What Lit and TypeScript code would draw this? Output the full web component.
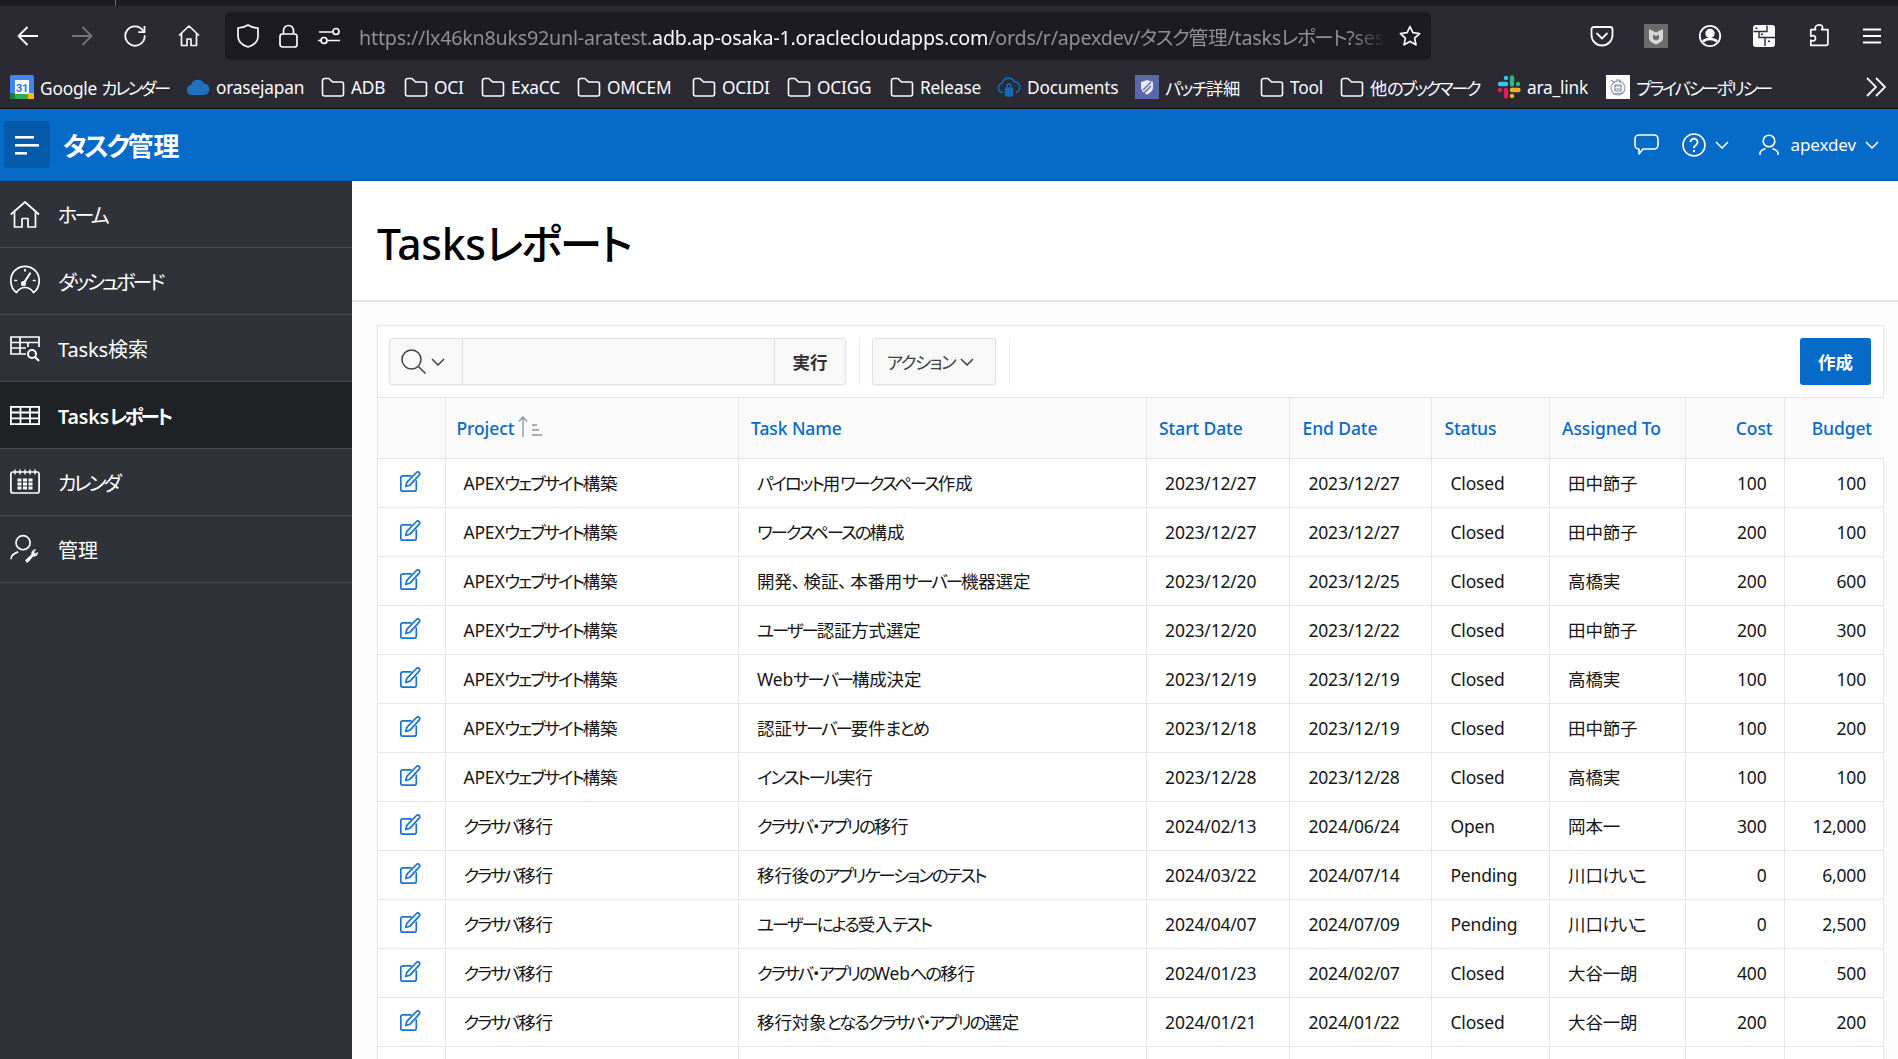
import { LitElement, html, css, svg } from "lit";
import { customElement } from "lit/decorators.js";

const jp = (s: string) =>
  s.split(/([\u3040-\u30ff\u30fb]+|\u3001)/).map((p, i) =>
    i % 2 ? html`<span class="${p === "\u3001" ? "c" : "k"}">${p}</span>` : p
  );

const folder = svg`<svg class="fav" viewBox="0 0 24 24" fill="none" stroke="#fbfbfe" stroke-width="1.6"><path d="M1.5 5.5a2 2 0 0 1 2-2h4.5l3.5 3.5h9a2 2 0 0 1 2 2v10a2 2 0 0 1-2 2h-17a2 2 0 0 1-2-2z" stroke-linejoin="round"/></svg>`;

const favs: Record<string, unknown> = {
  folder,
  cal: svg`<svg class="fav" viewBox="0 0 24 24"><rect width="24" height="24" rx="2" fill="#4285f4"/><rect y="18" width="24" height="6" fill="#34a853"/><rect x="18" y="18" width="6" height="6" fill="#fbbc04"/><rect x="18" y="6" width="6" height="12" fill="#4285f4"/><rect x="5" y="5" width="14" height="14" fill="#fff"/><rect y="18" x="0" width="5" height="6" fill="#188038"/><text x="12" y="16.5" font-size="11" font-weight="700" text-anchor="middle" fill="#1a73e8" font-family="Roboto,sans-serif">31</text></svg>`,
  cloud: svg`<svg class="fav" viewBox="0 0 24 24"><path d="M6 20a5 5 0 0 1-1-9.9 7 7 0 0 1 13-1.6A5.8 5.8 0 0 1 18.5 20z" fill="#1e72c0"/></svg>`,
  docs: svg`<svg class="fav" viewBox="0 0 24 24" fill="none" stroke="#0f6cbd" stroke-width="1.6"><path d="M6 17.5a4.7 4.7 0 0 1-.8-9.3 6.6 6.6 0 0 1 12.4-1.3 5.3 5.3 0 0 1 1.2 10.4"/><rect x="8.5" y="13" width="7" height="8" rx="1" fill="#0f6cbd"/><path d="M10 13v-2a2 2 0 0 1 4 0v2"/></svg>`,
  patch: svg`<svg class="fav" viewBox="0 0 24 24"><rect width="24" height="24" fill="#5b68ae"/><path d="M12 5l6 2v5c0 4-3 6-6 7.5C9 18 6 16 6 12V7z" fill="#e8eaf6"/><path d="M8 15l8-8M9 18l7-7" stroke="#5b68ae" stroke-width="1.4"/></svg>`,
  slack: svg`<svg class="fav" viewBox="0 0 24 24" fill="none" stroke-width="4.4" stroke-linecap="round"><path d="M9 3v0M3 9h6" stroke="#36c5f0"/><path d="M15 2.5v7M21 9v0" stroke="#2eb67d"/><path d="M15 21v0M15 15h6.5" stroke="#ecb22e"/><path d="M3 15v0M9 15v6.5" stroke="#e01e5a"/></svg>`,
  priv: svg`<svg class="fav" viewBox="0 0 24 24"><rect width="24" height="24" fill="#fff"/><g fill="none" stroke="#8a94a6" stroke-width="1.1"><circle cx="12" cy="13" r="7"/><path d="M5 5l4 3M8 11h8M8 14h8M7 19l10-1M10 5h4v3"/><rect x="9" y="10" width="6" height="6"/></g></svg>`,
};

const marks: [string, string, number][] = [
  ["cal", "Google カレンダー", 176],
  ["cloud", "orasejapan", 135],
  ["folder", "ADB", 83],
  ["folder", "OCI", 77],
  ["folder", "ExaCC", 96],
  ["folder", "OMCEM", 115],
  ["folder", "OCIDI", 95],
  ["folder", "OCIGG", 103],
  ["folder", "Release", 107],
  ["docs", "Documents", 138],
  ["patch", "パッチ詳細", 125],
  ["folder", "Tool", 80],
  ["folder", "他のブックマーク", 157],
  ["slack", "ara_link", 109],
  ["priv", "プライバシーポリシー", 258],
];

const navIcons = [
  svg`<svg viewBox="0 0 30 27" fill="none" stroke="#fff" stroke-width="1.7"><path d="M.8 13.5 15 1l14 12.5M4.5 11v15h7.5v-8.5h6V26h7.5V11" stroke-linejoin="round"/></svg>`,
  svg`<svg viewBox="0 0 30 29" fill="none" stroke="#fff" stroke-width="1.7"><path d="M6.5 27.5c-3.700-2.500-5.700-7-5.700-12a14.200 14.200 0 0 1 28.400 0c0 5-2 9.500-5.700 12-1.500-2.300-5-5-8.500-5s-7 2.700-8.500 5z" stroke-linejoin="round"/><path d="M13.500 18.500 20 8.500" stroke-width="2.200" stroke-linecap="round"/><circle cx="13.500" cy="18.500" r="1.700" fill="#fff"/><path d="M15 4.500v1.500M5 15.500h1.500M23.500 15.500H25" stroke-linecap="round"/></svg>`,
  svg`<svg viewBox="0 0 30 26" fill="none" stroke="#fff" stroke-width="1.7"><path d="M16 18H1V1h28v10M1 6.500h28M1 12h15M10 1v17M18 6.500V11"/><circle cx="22" cy="18" r="4" stroke-width="2"/><path d="m25 21 4 4" stroke-width="2.200"/></svg>`,
  svg`<svg viewBox="0 0 30 19" fill="none" stroke="#fff" stroke-width="1.800"><rect x=".9" y=".9" width="28.200" height="17.200"/><path d="M1 6.500h28M1 12.300h28M10.500 1v17M20 1v17"/></svg>`,
  svg`<svg viewBox="0 0 30 25" fill="none" stroke="#fff" stroke-width="1.700"><rect x=".9" y="3" width="28.200" height="21" rx="2"/><path d="M5 .5v5M10 .5v5M15 .5v5M20 .5v5M25 .5v5" stroke-width="1.400"/><path d="M7.500 11h15M7.500 15h15M7.500 19h15" stroke-width="3" stroke-dasharray="4 1.500"/></svg>`,
  svg`<svg viewBox="0 0 31 30" fill="none" stroke="#fff" stroke-width="1.700"><circle cx="13.500" cy="9" r="7.300"/><path d="M1 26c0-4 3-6 7.500-7.500M19 19.500"/><path d="M17 29c-1-.8-1-1.800 0-2.800l5.500-5c-.6-2.500 1-5 4-5.200l-2 2.600 1.500 2 2.700-1.600c-.2 3-2.700 4.500-5 4l-4.500 5.500c-.8 1-1.700 1.200-2.200.5z" fill="#fff" stroke-width=".6"/></svg>`,
];

const nav = ["ホーム", "ダッシュボード", "Tasks検索", "Tasksレポート", "カレンダ", "管理"];

const A = "APEXウェブサイト構築";
const C = "クラサバ移行";
const rows: string[][] = [
  [A, "パイロット用ワークスペース作成", "2023/12/27", "2023/12/27", "Closed", "田中節子", "100", "100"],
  [A, "ワークスペースの構成", "2023/12/27", "2023/12/27", "Closed", "田中節子", "200", "100"],
  [A, "開発、検証、本番用サーバー機器選定", "2023/12/20", "2023/12/25", "Closed", "高橋実", "200", "600"],
  [A, "ユーザー認証方式選定", "2023/12/20", "2023/12/22", "Closed", "田中節子", "200", "300"],
  [A, "Webサーバー構成決定", "2023/12/19", "2023/12/19", "Closed", "高橋実", "100", "100"],
  [A, "認証サーバー要件まとめ", "2023/12/18", "2023/12/19", "Closed", "田中節子", "100", "200"],
  [A, "インストール実行", "2023/12/28", "2023/12/28", "Closed", "高橋実", "100", "100"],
  [C, "クラサバ・アプリの移行", "2024/02/13", "2024/06/24", "Open", "岡本一", "300", "12,000"],
  [C, "移行後のアプリケーションのテスト", "2024/03/22", "2024/07/14", "Pending", "川口けいこ", "0", "6,000"],
  [C, "ユーザーによる受入テスト", "2024/04/07", "2024/07/09", "Pending", "川口けいこ", "0", "2,500"],
  [C, "クラサバ・アプリのWebへの移行", "2024/01/23", "2024/02/07", "Closed", "大谷一朗", "400", "500"],
  [C, "移行対象となるクラサバ・アプリの選定", "2024/01/21", "2024/01/22", "Closed", "大谷一朗", "200", "200"],
  ["", "", "", "", "", "", "", ""],
];

const heads = ["Project", "Task Name", "Start Date", "End Date", "Status", "Assigned To", "Cost", "Budget"];
const colW = [67, 293.6, 408, 143.4, 142, 117.6, 136.4, 99, 99];

const chevron = svg`<svg class="chev" viewBox="0 0 14 8" fill="none" stroke="currentColor" stroke-width="1.500"><path d="m1 1 6 6 6-6"/></svg>`;

const editIcon = svg`<svg class="edit" viewBox="0 0 21 21" fill="none" stroke="#1a73d0" stroke-width="1.700"><path d="M11 4.800H2.800a2 2 0 0 0-2 2v11.400a2 2 0 0 0 2 2h11.500a2 2 0 0 0 2-2V10" stroke-linecap="round"/><path d="M5.800 15.500l1-4.200L16.500 1.500a1.800 1.800 0 0 1 2.700 0 1.800 1.800 0 0 1 0 2.700L9.800 14.300z" stroke-linejoin="round"/></svg>`;

@customElement("app-root")
export class AppRoot extends LitElement {
  static styles = css`
    :host {
      display: flex;
      flex-direction: column;
      height: 1059px;
      overflow: hidden;
      font-family: "Noto Sans", "Noto Sans CJK JP", sans-serif;
      font-size: 17.5px;
      color: #161616;
      letter-spacing: -0.2px;
    }
    .k { font-feature-settings: "palt"; letter-spacing: -0.09em; }
    .c { font-feature-settings: "palt"; letter-spacing: 0.18em; }
    svg { display: block; flex: none; }
    .tabs { height: 6px; background: #1c1b22; display: flex; flex: none; }
    .tabs i { width: 1px; margin-left: 115px; background: #6b6a72; }
    .toolbar {
      height: 54px; flex: none; background: #2b2a33; color: #fbfbfe;
      display: flex; align-items: flex-start; padding: 6px 0 0 0; box-sizing: border-box;
    }
    .tool { width: 53.7px; height: 48px; display: flex; align-items: center; justify-content: center; flex: none; }
    .tool svg { width: 22px; height: 22px; }
    .navbtns { display: flex; width: 225px; padding-left: 1px; box-sizing: border-box; flex: none; }
    .url {
      width: 1206px; height: 48px; background: #1c1b22; border-radius: 6px; flex: none;
      display: flex; align-items: center; box-sizing: border-box; padding-left: 12px;
    }
    .url .u { width: 40.7px; display: flex; flex: none; }
    .url .u svg { width: 22px; height: 24px; }
    .url .u svg.perm { height: 18px; }
    .urltext {
      width: 1027px; flex: none; overflow: hidden; white-space: nowrap; font-size: 19.7px; color: #8f8f94; letter-spacing: -0.22px;
      -webkit-mask-image: linear-gradient(90deg, #000 96.5%, transparent 100%);
    }
    .urltext b { font-weight: 400; color: #fbfbfe; }
    .urltext .k { letter-spacing: -0.07em; }
    .star { margin-left: 13px; width: 22px; height: 22px; }
    .right { display: flex; margin-left: 144px; align-items: center; height: 48px; flex: none; }
    .right span { width: 54px; display: flex; justify-content: center; }
    .right svg { width: 24px; height: 24px; }
    .marks {
      height: 49px; flex: none; background: #2b2a33; color: #fbfbfe; display: flex; align-items: center; padding: 6px 0 0 10px;
      box-sizing: border-box; border-bottom: 1px solid #0c0c0d; font-size: 17.3px;
    }
    .mark { display: flex; align-items: center; gap: 6px; white-space: nowrap; flex: none; }
    .tight .k { letter-spacing: -0.14em; }
    .fav { width: 24px; height: 24px; }
    .more { margin-left: auto; margin-right: 11px; width: 22px; height: 22px; }
    .head {
      height: 72px; flex: none; background: #056ac8; color: #fff; display: flex; align-items: center; box-sizing: border-box;
      border-bottom: 1px solid #0459a8; padding-left: 4px;
    }
    .burger { width: 46px; height: 47px; background: #0559a9; border-radius: 3px; display: flex; align-items: center; justify-content: center; }
    .burger svg { width: 24px; height: 20px; }
    .brand { margin-left: 13px; font-size: 26px; font-weight: 700; letter-spacing: 0; }
    .hright { margin-left: auto; display: flex; align-items: center; }
    .hright .chev { width: 14px; height: 8px; }
    .chat { width: 25px; height: 21px; margin-right: 23px; }
    .help { width: 24px; height: 24px; margin-right: 9px; }
    .user { width: 20px; height: 21px; margin-left: 30px; margin-right: 11px; }
    .uname { margin-right: 9px; font-size: 17px; letter-spacing: -0.1px; }
    .hright .last { margin-right: 19px; }
    .body { flex: 1; display: flex; min-height: 0; }
    aside { width: 352px; flex: none; background: #2f3339; color: #fff; font-size: 20px; letter-spacing: -0.1px; }
    aside .k { letter-spacing: -0.14em; }
    .item {
      height: 67px; box-sizing: border-box; border-bottom: 1px solid #474a4f; display: flex; align-items: center; padding-left: 10px;
    }
    .item.on { background: #1f2225; font-weight: 600; font-size: 19.5px; }
    .ic { width: 30px; display: flex; margin-right: 18px; }
    .ic svg { width: 30px; }
    .item:nth-child(2) .ic { margin-top: -3px; }
    .item:nth-child(3) .ic { margin-top: 2px; }
    .item:nth-child(5) .ic { margin-top: -2px; }
    main { flex: 1; min-width: 0; background: #fcfcfc; }
    .title {
      height: 121px; box-sizing: border-box; background: #fff; border-bottom: 2px solid #e4e4e4; padding: 2px 0 0 25px; display: flex; align-items: center;
      font-size: 42.6px; font-weight: 500; color: #000; letter-spacing: -0.3px;
    }
    .title .k { letter-spacing: -0.05em; }
    .card { margin: 23px 14px 0 25px; border: 1px solid #e6e6e6; border-bottom: none; background: #fff; }
    .bar { height: 71px; box-sizing: border-box; display: flex; align-items: center; padding: 0 12px 0 11px; }
    .search {
      display: flex; height: 47px; width: 457px; box-sizing: border-box; border: 1px solid #e2e2e2; border-radius: 3px; background: #f8f8f8; box-shadow: 0 1px 2px rgba(0,0,0,.05);
    }
    .search .s1 { width: 73px; display: flex; align-items: center; padding-left: 11px; box-sizing: border-box; gap: 5px; border-right: 1px solid #e2e2e2; color: #404040; }
    .search .s1 svg:first-child { width: 25px; height: 25px; }
    .search .s2 { flex: 1; }
    .search .s3 { width: 70px; border-left: 1px solid #e2e2e2; display: flex; align-items: center; justify-content: center; font-weight: 600; color: #303030; letter-spacing: 0; }
    .chev { width: 14px; height: 8px; }
    .sep { width: 1px; height: 47px; background: #ececec; margin: 0 12.5px; }
    .action {
      width: 124px; height: 47px; box-sizing: border-box; border: 1px solid #e2e2e2; border-radius: 3px; background: #f8f8f8; display: flex; align-items: center; padding-left: 14px; gap: 5px; color: #404040; box-shadow: 0 1px 2px rgba(0,0,0,.05);
    }
    .create {
      margin-left: auto; width: 71px; height: 47px; background: #056ac8; color: #fff; font-weight: 600; border-radius: 3px; display: flex; align-items: center; justify-content: center; letter-spacing: 0;
    }
    table { border-collapse: collapse; table-layout: fixed; width: 100%; }
    th, td { border: 1px solid #e6e6e6; box-sizing: border-box; white-space: nowrap; overflow: hidden; padding: 0; text-align: left; line-height: 22px; }
    tr > :first-child { border-left: none; }
    tr > :last-child { border-right: none; }
    th { height: 61px; background: #fafafa; color: #056ac8; font-weight: 500; padding: 0 12px; letter-spacing: -0.1px; }
    td { height: 49px; padding: 0 18px; }
    td .k { letter-spacing: -0.12em; }
    td.e { padding: 0; }
    th.r, td.r { text-align: right; }
    .edit { width: 21px; height: 21px; margin: 0 0 3px 22px; }
    .sort { display: flex; align-items: center; gap: 4px; margin-left: -1px; }
    .sort svg { width: 24px; height: 21px; margin-top: -4px; }
  `;

  render() {
    return html`
      <div class="tabs"><i></i></div>
      <div class="toolbar">
        <div class="navbtns">
          <span class="tool"><svg viewBox="0 0 22 22" fill="none" stroke="#fbfbfe" stroke-width="1.800"><path d="M21 11H2M10.500 2 1.500 11l9 9" stroke-linejoin="round"/></svg></span>
          <span class="tool"><svg viewBox="0 0 22 22" fill="none" stroke="#77767c" stroke-width="1.800"><path d="M1 11h19M11.500 2l9 9-9 9" stroke-linejoin="round"/></svg></span>
          <span class="tool"><svg viewBox="0 0 22 22" fill="none" stroke="#fbfbfe" stroke-width="1.800"><path d="M19 5.500A9.700 9.700 0 1 0 20.700 11" stroke-linecap="round"/><path d="M20.500 1v6.200h-6.200" stroke-linejoin="round"/></svg></span>
          <span class="tool"><svg viewBox="0 0 22 22" fill="none" stroke="#fbfbfe" stroke-width="1.700"><path d="M1 10.500 11 1l10 9.500M3.500 8.500v12h5.500v-6.500h4v6.500h5.500v-12" stroke-linejoin="round"/></svg></span>
        </div>
        <div class="url">
          <span class="u"><svg viewBox="0 0 22 24" fill="none" stroke="#fbfbfe" stroke-width="1.700"><path d="M11 1c3 2 6 3 10 3v8c0 6-5 9.500-10 11C6 21.500 1 18 1 12V4c4 0 7-1 10-3z" stroke-linejoin="round"/></svg></span>
          <span class="u"><svg viewBox="0 0 22 24" fill="none" stroke="#fbfbfe" stroke-width="1.700"><rect x="2" y="10" width="17" height="13" rx="2.500"/><path d="M5.500 10V6.500a5 5 0 0 1 10 0V10"/></svg></span>
          <span class="u"><svg class="perm" viewBox="0 0 22 18" fill="none" stroke="#fbfbfe" stroke-width="1.700"><path d="M1 5h13M0 13.500h4M10 13.500h12" /><circle cx="18" cy="4.500" r="3"/><circle cx="6" cy="13.500" r="3"/></svg></span>
          <div class="urltext">https://lx46kn8uks92unl-aratest.<b>adb.ap-osaka-1.oraclecloudapps.com</b>/ords/r/apexdev/${jp("タスク管理")}/tasks${jp("レポート")}?ses</div>
          <svg class="star" viewBox="0 0 22 22" fill="none" stroke="#fbfbfe" stroke-width="1.700"><path d="m11 1.500 2.900 6.200 6.700.8-5 4.600 1.400 6.700-6-3.400-6 3.400 1.400-6.700-5-4.600 6.700-.8z" stroke-linejoin="round"/></svg>
        </div>
        <div class="right">
          <span><svg viewBox="0 0 24 24" fill="none" stroke="#fbfbfe" stroke-width="1.800"><path d="M4 3h16a2.500 2.500 0 0 1 2.500 2.500V11c0 6-5 10.500-10.500 10.500S1.500 17 1.500 11V5.500A2.500 2.500 0 0 1 4 3z"/><path d="m7 9.500 5 5 5-5" stroke-linecap="round"/></svg></span>
          <span><svg viewBox="0 0 24 24"><rect width="24" height="24" fill="#6c6c6c"/><path d="M5 5l7 3.500L19 5v9c0 3-3 5-7 6.500C8 19 5 17 5 14z" fill="#d8d8d8"/><path d="M9 10.500l3 1.500 3-1.500V15l-3 1.500L9 15z" fill="#6c6c6c"/></svg></span>
          <span><svg viewBox="0 0 24 24" fill="none" stroke="#fbfbfe" stroke-width="1.800"><circle cx="12" cy="12" r="10.200"/><circle cx="12" cy="9.500" r="3.800" fill="#fbfbfe"/><path d="M5 17.500c2-2 4-2.500 7-2.500s5 .5 7 2.500" stroke-width="2.500"/></svg></span>
          <span><svg viewBox="0 0 24 24"><rect x="1" y="1" width="22" height="22" rx="3" fill="#fbfbfe"/><g stroke="#2b2a33" stroke-width="1.400" fill="none"><path d="M1.500 7.500H15v-6M7 7.500v6h16M13 13.500v8.500"/></g><g fill="#2b2a33"><rect x="3.500" y="3.500" width="2" height="1.500"/><rect x="9" y="9.500" width="2" height="1.500"/><rect x="16" y="16.500" width="2" height="1.500"/></g></svg></span>
          <span><svg viewBox="0 0 24 24" fill="none" stroke="#fbfbfe" stroke-width="1.800"><path d="M9 6H4v7c3-1.500 5-.5 5 2s-2 3.500-5 2v5.500h16a2 2 0 0 0 2-2V6h-6.500c2-3 .5-5-2.500-5S7.500 3 9 6z" stroke-linejoin="round" transform="translate(1 0) scale(.95)"/></svg></span>
          <span><svg viewBox="0 0 24 24" fill="none" stroke="#fbfbfe" stroke-width="1.800"><path d="M3 5.500h18M3 12h18M3 18.500h18"/></svg></span>
        </div>
      </div>
      <div class="marks">
        ${marks.map(
          ([f, t, w]) => html`<div class="mark ${f === "priv" || f === "cal" || t.startsWith("他") ? "tight" : ""}" style="width:${w}px">${favs[f]}<span>${jp(t)}</span></div>`
        )}
        <svg class="more" viewBox="0 0 22 22" fill="none" stroke="#fbfbfe" stroke-width="1.800"><path d="m2 2 9 9-9 9M11 2l9 9-9 9"/></svg>
      </div>
      <div class="head">
        <div class="burger"><svg viewBox="0 0 24 20" fill="#fff"><rect y="1" width="19" height="2.600"/><rect y="9" width="24" height="2.600"/><rect y="17" width="12" height="2.600"/></svg></div>
        <div class="brand">${jp("タスク管理")}</div>
        <div class="hright">
          <svg class="chat" viewBox="0 0 25 21" fill="none" stroke="#fff" stroke-width="1.600"><path d="M5 1h15a4 4 0 0 1 4 4v6a4 4 0 0 1-4 4H9l-4 5v-5a4 4 0 0 1-4-4V5a4 4 0 0 1 4-4z" stroke-linejoin="round"/></svg>
          <svg class="help" viewBox="0 0 24 24" fill="none" stroke="#fff" stroke-width="1.600"><circle cx="12" cy="12" r="11"/><path d="M8.500 9a3.500 3.500 0 1 1 5.500 3c-1.300.8-2 1.400-2 3" stroke-width="2"/><circle cx="12" cy="18" r="1.200" fill="#fff" stroke="none"/></svg>
          ${chevron}
          <svg class="user" viewBox="0 0 20 21" fill="none" stroke="#fff" stroke-width="1.600"><circle cx="10" cy="7" r="5.800"/><path d="M1 21v-2c0-2 1.500-3 5.500-4.500M19 21v-2c0-2-1.500-3-5.500-4.500"/></svg>
          <span class="uname">apexdev</span>
          <span class="last">${chevron}</span>
        </div>
      </div>
      <div class="body">
        <aside>
          ${nav.map(
            (n, i) => html`<div class="item ${i === 3 ? "on" : ""}"><span class="ic">${navIcons[i]}</span><span>${jp(n)}</span></div>`
          )}
        </aside>
        <main>
          <div class="title"><span>Tasks${jp("レポート")}</span></div>
          <div class="card">
            <div class="bar">
              <div class="search">
                <div class="s1">
                  <svg viewBox="0 0 25 25" fill="none" stroke="#404040" stroke-width="1.500"><circle cx="10.500" cy="10.500" r="9.500"/><path d="m17.500 17.500 7 7"/></svg>
                  ${chevron}
                </div>
                <div class="s2"></div>
                <div class="s3">実行</div>
              </div>
              <div class="sep"></div>
              <div class="action"><span>${jp("アクション")}</span>${chevron}</div>
              <div class="sep"></div>
              <div class="create">作成</div>
            </div>
            <table>
              <colgroup>${colW.map((w) => html`<col style="width:${w}px" />`)}</colgroup>
              <thead>
                <tr>
                  <th></th>
                  ${heads.map((h, i) =>
                    i === 0
                      ? html`<th><span class="sort">${h}<svg viewBox="0 0 24 21" fill="none" stroke="#8d9298" stroke-width="1.300"><path d="M5 21V1M1 5.500 5 1l4 4.500M14 9h5M14 14h7M14 19h10"/></svg></span></th>`
                      : html`<th class="${i > 5 ? "r" : ""}">${h}</th>`
                  )}
                </tr>
              </thead>
              <tbody>
                ${rows.map(
                  (r) => html`<tr>
                    <td class="e">${r[0] ? editIcon : ""}</td>
                    ${r.map((c, i) => html`<td class="${i > 5 ? "r" : ""}">${jp(c)}</td>`)}
                  </tr>`
                )}
              </tbody>
            </table>
          </div>
        </main>
      </div>
    `;
  }
}
